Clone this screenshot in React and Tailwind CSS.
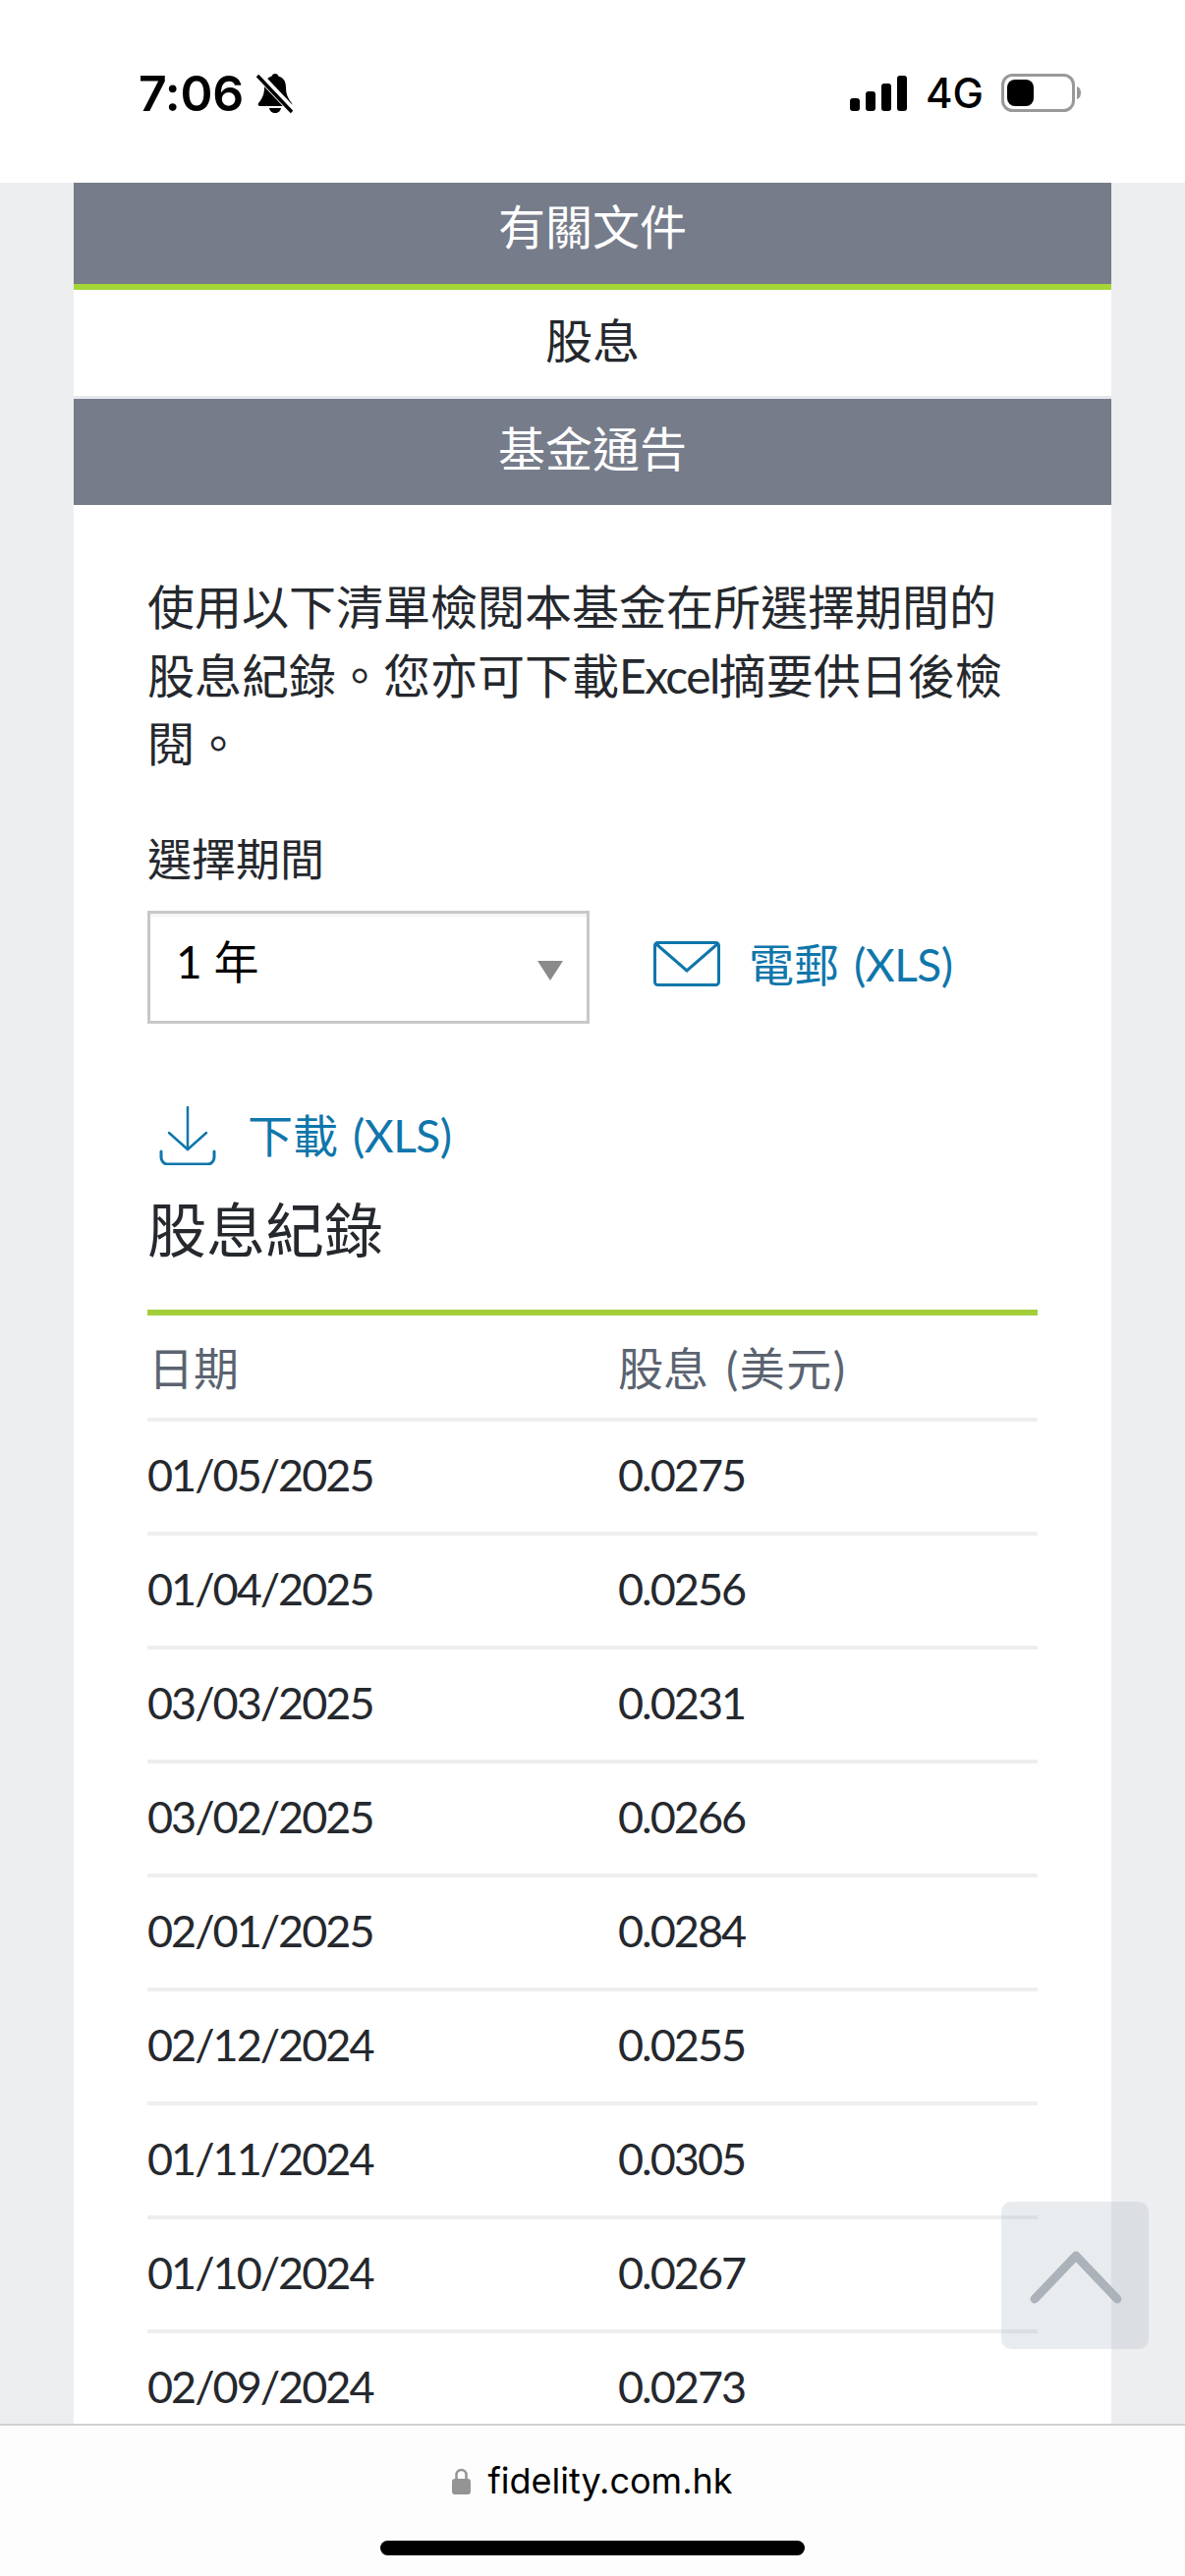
import React from 'react';

const cjk = 'font-["Lato","Noto_Sans_CJK_TC",sans-serif]';

const rows = [
  ['01/05/2025', '0.0275'],
  ['01/04/2025', '0.0256'],
  ['03/03/2025', '0.0231'],
  ['03/02/2025', '0.0266'],
  ['02/01/2025', '0.0284'],
  ['02/12/2024', '0.0255'],
  ['01/11/2024', '0.0305'],
  ['01/10/2024', '0.0267'],
  ['02/09/2024', '0.0273'],
];

function StatusBar() {
  return (
    <div className='h-[186px] shrink-0 bg-white flex items-start justify-between pl-[141px] pr-[105px] pt-[66px] font-["Inter",sans-serif] text-black'>
      <div className="flex items-center h-[58px] gap-[12px]">
        <span className="text-[50px] leading-none font-semibold tracking-[-0.3px]">7:06</span>
        <svg width="40" height="42" viewBox="0 0 40 42">
          <path d="M20 1c2 0 3 1 3.400 2.600C29 5 31 10 31 15c0 7 2 11 6 16 1 2 0 3-2 3H5c-2 0-3-1-2-3 4-5 6-9 6-16 0-5 2-10 7.600-11.400C17 2 18 1 20 1z" fill="black" />
          <path d="M14 36h12c-.5 3-3 5-6 5s-5.500-2-6-5z" fill="black" />
          <path d="M2 1l36 38" stroke="white" strokeWidth="8" />
          <path d="M2 3l35 37" stroke="black" strokeWidth="3.500" />
        </svg>
      </div>
      <div className="flex items-center h-[58px]">
        <svg width="59" height="36" viewBox="0 0 59 36" className="mr-[18px]">
          <rect x="0" y="23" width="10" height="13" rx="3" fill="black" />
          <rect x="16" y="16" width="10" height="20" rx="3" fill="black" />
          <rect x="32" y="8" width="10" height="28" rx="3" fill="black" />
          <rect x="48" y="0" width="10" height="36" rx="3" fill="black" />
        </svg>
        <span className="text-[42px] leading-none font-medium mr-[18px]">4G</span>
        <svg width="82" height="40" viewBox="0 0 82 40">
          <rect x="1.500" y="1.500" width="72" height="36" rx="10" fill="none" stroke="#999999" strokeWidth="3" />
          <rect x="6" y="6" width="27" height="27" rx="8" fill="black" />
          <path d="M77 13c3 1 4 3 4 6.500S80 25 77 26z" fill="#999999" />
        </svg>
      </div>
    </div>
  );
}

function MailIcon() {
  return (
    <svg width="68" height="46" viewBox="0 0 68 46" fill="none" stroke="#0f76ab" strokeWidth="3">
      <rect x="1.500" y="1.500" width="65" height="43" rx="3" />
      <path d="M3 3l31 27L65 3" />
    </svg>
  );
}

function DownloadIcon() {
  return (
    <svg width="58" height="60" viewBox="0 0 58 60" fill="none" stroke="#0f76ab" strokeWidth="2.500" strokeLinecap="round">
      <path d="M29 1v42" />
      <path d="M10 27l19 17 19-17" />
      <path d="M2 46v6c0 4 3 7 7 7h40c4 0 7-3 7-7v-6" strokeWidth="3" />
    </svg>
  );
}

export default function App() {
  return (
    <div className={`relative h-[2622px] w-[1206px] overflow-hidden flex flex-col bg-white ${cjk}`}>
      <StatusBar />
      <main className="flex-1 min-h-0 overflow-hidden bg-[#eceef0] px-[75px]">
        <div className="bg-white text-center">
          <div className="h-[109px] bg-[#767c8a] border-b-[6px] border-[#a4d637] flex items-center justify-center text-[48px] text-white pb-[14px]">有關文件</div>
          <div className="h-[111px] border-b-[3px] border-[#e4e7ec] flex items-center justify-center text-[48px] text-[#25282d] pb-[4px]">股息</div>
          <div className="h-[108px] bg-[#767c8a] flex items-center justify-center text-[48px] text-white pb-[6px]">基金通告</div>
        </div>
        <div className="bg-white px-[75px] pt-[69px]">
          <p className="text-[48px] leading-[69.500px] text-[#25282d]">
            使用以下清單檢閱本基金在所選擇期間的<br />
            股息紀錄。您亦可下載<span className="tracking-[-1.600px]">Excel</span>摘要供日後檢<br />
            閱。
          </p>
          <div className="mt-[53px] h-[60px] leading-[60px] text-[45px] text-[#25282d]">選擇期間</div>
          <div className="mt-[22px] flex items-center">
            <div className="h-[115px] w-[450px] border-[3px] border-[#c8c8c8] shadow-[inset_0_3px_3px_rgba(0,0,0,0.05)] flex items-start justify-between pl-[26px] pr-[24px] pt-[22px] bg-white">
              <span className="text-[46px] leading-[54px] text-black">1 年</span>
              <span className="mt-[26px] w-0 h-0 border-x-[13px] border-x-transparent border-t-[20px] border-t-[#8a8a8a]" />
            </div>
            <a className="ml-[65px] flex items-center gap-[29px] text-[46px] text-[#0f76ab] mt-[-6px]">
              <MailIcon />
              <span>電郵<span className="ml-[15px] tracking-[-0.500px]">(XLS)</span></span>
            </a>
          </div>
          <a className="mt-[84px] h-[60px] pl-[12px] flex items-center gap-[32px] text-[46px] text-[#0f76ab]">
            <DownloadIcon />
            <span>下載<span className="ml-[15px] tracking-[-0.500px]">(XLS)</span></span>
          </a>
          <h2 className="mt-[26px] h-[80px] leading-[80px] text-[60px] font-normal text-[#25282d]">股息紀錄</h2>
          <div className="mt-[41px] border-t-[6px] border-[#a4ce39]">
            <div className="grid grid-cols-[479px_1fr] h-[104px] items-center text-[46px] text-[#5b6370] pt-[3px]">
              <span className="pl-[1px]">日期</span>
              <span>股息<span className="ml-[18px] tracking-[1.500px]">(美元)</span></span>
            </div>
            {rows.map(([date, value]) => (
              <div key={date} className="grid grid-cols-[479px_1fr] h-[116px] items-center border-t-[4px] border-[#eeeeee] text-[45px] tracking-[-2px] text-[#25282d] pb-[2px]">
                <span>{date}</span>
                <span>{value}</span>
              </div>
            ))}
          </div>
        </div>
      </main>
      <footer className="h-[155px] shrink-0 bg-[#fdfdfd] border-t-2 border-[#cfd0d2] flex flex-col items-center">
        <div className='mt-[32px] h-[48px] flex items-center gap-[17px] font-["Inter",sans-serif] text-[36px] text-black'>
          <svg width="19" height="27" viewBox="0 0 19 27">
            <path d="M4.500 12V7a5 5 0 0 1 10 0v5" fill="none" stroke="#949494" strokeWidth="2.500" />
            <rect x="0" y="11" width="19" height="16" rx="3" fill="#949494" />
          </svg>
          <span>fidelity.com.hk</span>
        </div>
        <div className="mt-[37px] h-[15px] w-[432px] rounded-full bg-black" />
      </footer>
      <button className="absolute left-[1019px] top-[2241px] h-[150px] w-[150px] rounded-[10px] bg-[#a9b2ba]/25 flex items-center justify-center">
        <svg width="94" height="54" viewBox="0 0 94 54" fill="none" stroke="#acb2b9" strokeWidth="9" strokeLinecap="round" strokeLinejoin="round" className="mt-[4px] ml-[2px]">
          <path d="M5 49L47 5l42 44" />
        </svg>
      </button>
    </div>
  );
}
